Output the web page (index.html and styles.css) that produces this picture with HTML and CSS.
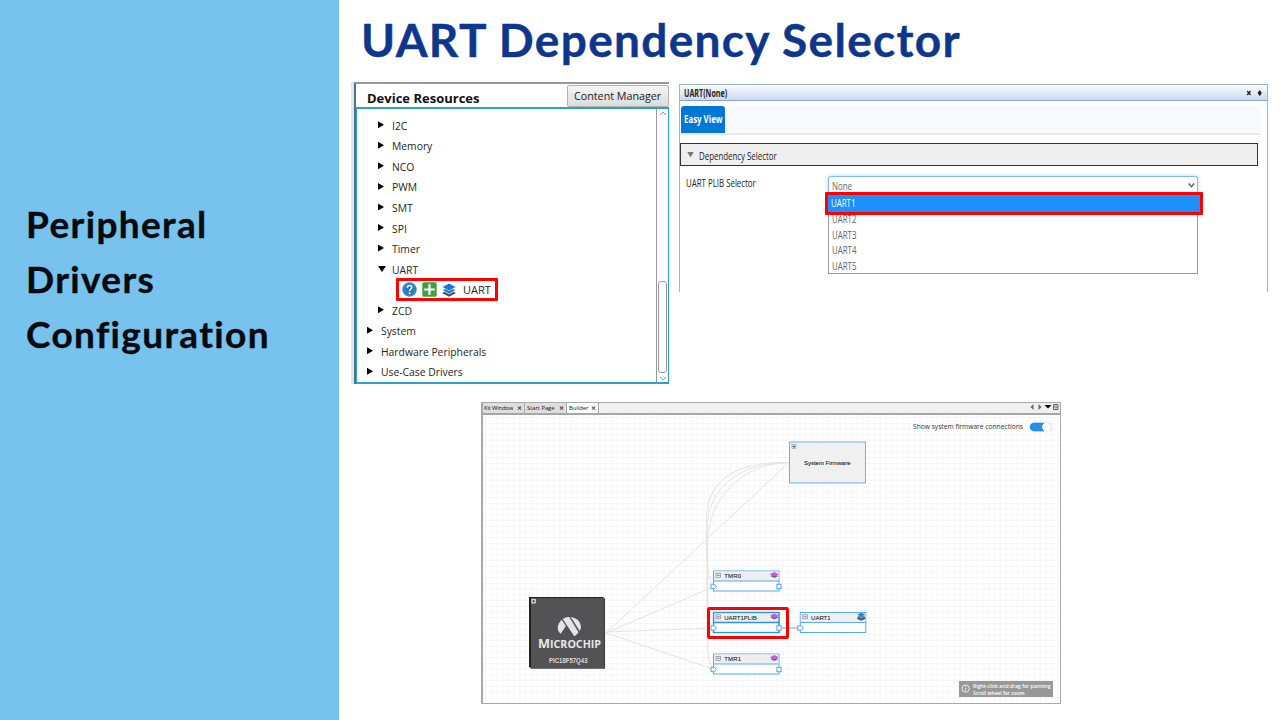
FILE: index.html
```html
<!DOCTYPE html>
<html lang="en">
<head>
<meta charset="utf-8">
<title>UART Dependency Selector</title>
<link rel="stylesheet" href="styles.css">
</head>
<body>
<div class="slide">
  <aside class="side"><h2><span class="fit">Peripheral</span><span class="fit">Drivers</span><span class="fit">Configuration</span></h2></aside>
  <main class="main">
    <h1><span class="fit">UART Dependency Selector</span></h1>
    <div class="panels">
      <section class="resources">
        <header class="res-head"><span class="fit res-title">Device Resources</span><button class="manager"><span class="fit">Content Manager</span></button></header>
        <div class="res-body">
          <ul class="tree">
            <li class="sub"><i class="arrow"></i><span class="fit">I2C</span></li>
            <li class="sub"><i class="arrow"></i><span class="fit">Memory</span></li>
            <li class="sub"><i class="arrow"></i><span class="fit">NCO</span></li>
            <li class="sub"><i class="arrow"></i><span class="fit">PWM</span></li>
            <li class="sub"><i class="arrow"></i><span class="fit">SMT</span></li>
            <li class="sub"><i class="arrow"></i><span class="fit">SPI</span></li>
            <li class="sub"><i class="arrow"></i><span class="fit">Timer</span></li>
            <li class="sub"><i class="arrow open"></i><span class="fit">UART</span></li>
            <li class="leaf"><div class="leaf-box">
              <svg width="15" height="15" viewBox="0 0 15 15"><circle cx="7.5" cy="7.5" r="7.2" fill="#2b7cc4"/><circle cx="7.5" cy="7.5" r="6.1" fill="none" stroke="#4b98d8" stroke-width=".6"/><path d="M5.3 5.8C5.3 4.4 6.2 3.6 7.6 3.6S9.8 4.4 9.8 5.5C9.8 7 7.6 7.1 7.6 8.9" fill="none" stroke="#fff" stroke-width="1.5"/><circle cx="7.6" cy="11.2" r="1" fill="#fff"/></svg>
              <svg width="15" height="15" viewBox="0 0 15 15"><rect x=".3" y=".3" width="14.4" height="14.4" rx="1.5" fill="#3f9f42"/><path d="M7.5 2.3v10.4M2.3 7.5h10.4" stroke="#fff" stroke-width="2.2"/></svg>
              <svg width="14" height="14" viewBox="0 0 14 14"><path d="M0 10 7 6.8 14 10 7 13.8Z" fill="#454e59"/><path d="M0 7 7 4 14 7 7 11Z" fill="#1978dc" stroke="#fff" stroke-width=".7"/><path d="M0 3.9 7 .2 14 3.9 7 7.8Z" fill="#1474e4" stroke="#fff" stroke-width=".6"/></svg>
              <span class="fit">UART</span></div></li>
            <li class="sub"><i class="arrow"></i><span class="fit">ZCD</span></li>
            <li><i class="arrow"></i><span class="fit">System</span></li>
            <li><i class="arrow"></i><span class="fit">Hardware Peripherals</span></li>
            <li><i class="arrow"></i><span class="fit">Use-Case Drivers</span></li>
          </ul>
          <div class="scroll">
            <svg width="8" height="5" viewBox="0 0 8 5"><path d="M1 4 4 1 7 4" fill="none" stroke="#999"/></svg>
            <div class="thumb"></div>
            <svg width="8" height="5" viewBox="0 0 8 5"><path d="M1 1 4 4 7 1" fill="none" stroke="#999"/></svg>
          </div>
        </div>
      </section>
      <section class="uart">
        <header class="uart-head"><span class="fit">UART(None)</span>
          <svg width="18" height="8" viewBox="0 0 18 8"><path d="M1.2 2 4.6 6M4.6 2 1.2 6" stroke="#222" stroke-width="1.3"/><path d="M12 3.9 13.7 1.6 15.4 3.9 13.7 6.6Z" fill="#111" stroke="#111" stroke-width=".7"/></svg></header>
        <div class="tabs"><div class="tab"><span class="fit">Easy View</span></div></div>
        <div class="section"><i class="arrow open grey"></i><span class="fit">Dependency Selector</span></div>
        <div class="field">
          <label><span class="fit">UART PLIB Selector</span></label>
          <div class="select">
            <div class="value"><span class="fit">None</span><svg width="8" height="6" viewBox="0 0 8 6"><path d="M1.8 .5 4.500 3.800 7 .5" fill="none" stroke="#555" stroke-width="1.300"/></svg></div>
            <div class="options">
              <div class="chosen"><span class="fit">UART1</span></div>
              <div><span class="fit">UART2</span></div>
              <div><span class="fit">UART3</span></div>
              <div><span class="fit">UART4</span></div>
              <div><span class="fit">UART5</span></div>
            </div>
          </div>
        </div>
      </section>
    </div>
    <section class="builder">
      <nav class="btabs">
        <div class="btab t1"><span class="fit">Kit Window</span><b>×</b></div>
        <div class="btab t2"><span class="fit">Start Page</span><b>×</b></div>
        <div class="btab t3"><span class="fit">Builder</span><b>×</b></div>
        <svg class="nav" width="29" height="8" viewBox="0 0 29 8"><path d="M3.500 1v6L.5 4ZM8.500 1v6l3-3Z" fill="#666"/><path d="M14.500 2h7l-3.500 3.500Z" fill="#000"/><path d="M23.500 1.500h4.500v5H23.500Z" fill="none" stroke="#666"/><path d="M24.800 3h2v2h-2Z" fill="none" stroke="#666" stroke-width=".7"/></svg>
      </nav>
      <svg class="canvas" width="577" height="288" viewBox="483 415 577 288">
        <defs>
          <pattern id="grid" x="485" y="417" width="5.720" height="5.720" patternUnits="userSpaceOnUse"><path d="M.5 0V6M0 .5H6" stroke="#f6f6f6" fill="none"/></pattern>
          <g id="node"><rect x=".5" y=".5" width="65.500" height="20" fill="#fff" stroke="#58a9f6"/><rect x="1" y="1" width="64.500" height="9.500" fill="#efefef"/><path d="M.5 10.500H66" stroke="#58a9f6"/><rect x="3" y="2.800" width="4.500" height="4" fill="#f4f4f4" stroke="#888" stroke-width=".7"/><path d="M4 4.800h2.600" stroke="#444" stroke-width=".7"/></g>
          <path id="in" d="M-2 13.800H1.500L3.500 16 1.500 18.200H-2Z" fill="#fff" stroke="#4aa2f4"/>
          <rect id="out" x="63.900" y="13.800" width="4.200" height="4.400" fill="#fff" stroke="#4aa2f4"/>
          <g id="layers"><path d="M0 4.600 4 3 8 4.600 4 6.500Z" fill="#666"/><path d="M0 2.600 4 .6 8 2.600 8 3.200 4 4.900 0 3.200Z" fill="#cc55e8"/></g>
        </defs>
        <rect x="483" y="415" width="577" height="288" fill="#fff"/>
        <rect x="483" y="415" width="577" height="288" fill="url(#grid)"/>
        <g fill="none" stroke="#e1e1e1" stroke-width=".9">
          <path d="M606 633 789 462.500M606 633 713 587M606 632 713 628M606 633 713 669"/>
          <path d="M789 462.500C735 461 706 481 706.500 520C706 548 706 575 713 587M789 462.500C735 463 709 490 707 527V640Q707 660 713 669M789 462.500C739 464 710 500 707.500 539V600Q707 620 713 628"/>
        </g>
        <path d="M782 628H799" stroke="#999"/>
        <g><rect x="789.500" y="442" width="76" height="41" fill="#f0f0f0" stroke="#66b1fb"/><rect x="792" y="444.500" width="4" height="4" fill="#eee" stroke="#999" stroke-width=".6"/><path d="M792.700 446.500h2.600M794 445.200v2.600" stroke="#333" stroke-width=".7"/><text class="ct" x="804" y="464.500" textLength="46.500">System Firmware</text></g>
        <g transform="translate(713 570.500)"><use href="#node"/><use href="#in"/><use href="#out"/><use href="#layers" x="57.300" y="1"/><text class="ct" x="11.300" y="7.600" textLength="16.700">TMR0</text></g>
        <g transform="translate(713 612)"><use href="#node"/><rect x=".5" y=".5" width="65.500" height="20" fill="none" stroke="#2792f4" stroke-width="1.300"/><path d="M.5 10.500H66" stroke="#2792f4" stroke-width="1.300"/><use href="#in"/><use href="#out"/><use href="#layers" x="57.300" y="1"/><text class="ct" x="11.300" y="7.900" textLength="32.500">UART1PLIB</text></g>
        <g transform="translate(713 653.500)"><use href="#node"/><use href="#in"/><use href="#out"/><use href="#layers" x="57.300" y="1"/><text class="ct" x="11.300" y="7.600" textLength="16.700">TMR1</text></g>
        <g transform="translate(799.800 612)"><use href="#node"/><use href="#in"/><path d="M57.500 5.500 61.500 3.500 65.500 5.500 65.500 7 61.500 8.700 57.500 7Z" fill="#585858"/><path d="M57.500 4.200 61.500 2 65.500 4.200 61.500 6.500Z" fill="#2481de" stroke="#ddd" stroke-width=".3"/><path d="M57.500 2.600 61.500.4 65.500 2.600 61.500 4.800Z" fill="#2481de" stroke="#ddd" stroke-width=".3"/><text class="ct" x="11.300" y="7.900" textLength="19.500">UART1</text></g>
        <rect x="708.500" y="608.500" width="79" height="29" rx=".7" fill="none" stroke="#f00" stroke-width="3"/>
        <g><path d="M529 597H603L605 599V668.500H531L529 666.500Z" fill="#222"/><rect x="531" y="598" width="73.500" height="70.500" fill="#535355"/><rect x="531.500" y="599" width="4.300" height="4.300" fill="#eee" stroke="#bbb" stroke-width=".4"/><path d="M532.300 601.200h2.700M533.650 599.800v2.800" stroke="#222" stroke-width=".8"/>
        <g fill="#e4e4e4"><path d="M557.800 629C557.500 625.500 559 622 561.700 619.800L565.800 626 560.800 633.800C559.200 632.600 558.100 631 557.800 629Z"/><path d="M562.700 619C564.800 617.600 567 617 569.200 617L578.500 632.200C577.500 633.800 576 635.200 574.200 636.200Z"/><path d="M570.800 617.100C577 617.900 581 622.500 580.900 627.300 580.800 628.700 580.400 629.900 579.700 631Z"/></g>
        <text x="538" y="647.800" class="chipname" textLength="63" lengthAdjust="spacingAndGlyphs"><tspan font-size="12">M</tspan>ICROCHIP</text>
        <text x="549" y="662.800" class="part" textLength="38.500" lengthAdjust="spacingAndGlyphs">PIC18F57Q43</text></g>
        <text x="913" y="428.600" class="show" textLength="110" lengthAdjust="spacingAndGlyphs">Show system firmware connections</text>
        <rect x="1030.500" y="423" width="21" height="8" rx="4" fill="#fff" stroke="#bcd9f5" stroke-width=".7"/><path d="M1034 422.800H1044V431.300H1034A4.250 4.250 0 0 1 1034 422.800Z" fill="#2490ee"/><circle cx="1046.300" cy="427" r="4.200" fill="#fff"/>
        <g><rect x="959" y="681" width="94" height="16" fill="#989898"/><circle cx="965.700" cy="688.600" r="3.600" fill="none" stroke="#fff" stroke-width=".8"/><path d="M965.700 688v2.500M965.700 686.300v.9" stroke="#fff" stroke-width=".9"/><text class="tip" x="973" y="688" textLength="77.500" lengthAdjust="spacingAndGlyphs">Right-click and drag for panning</text><text class="tip" x="973" y="694.800" textLength="51.500" lengthAdjust="spacingAndGlyphs">Scroll wheel for zoom</text></g>
      </svg>
    </section>
  </main>
</div>
</body>
</html>
```
FILE: styles.css
```css
* { box-sizing: border-box; }
body { margin: 0; background: #fff; }
.slide { display: flex; width: 1280px; height: 720px; overflow: hidden; font-family: "Open Sans", sans-serif; }
.fit { display: inline-block; white-space: nowrap; transform-origin: 0 50%; }
.side { width: 339px; background: #78c3ee; padding: 196px 0 0 26px; }
.side h2 { margin: 0; font: 700 37px/55px Lato, sans-serif; color: #070b10; display: flex; flex-direction: column; align-items: flex-start; letter-spacing: 1.350px; font-variant-ligatures: none; -webkit-text-stroke: .4px #070b10; }
.main { flex: 1; min-width: 0; }
h1 { margin: 0; height: 82px; padding-left: 22px; font: 700 46px/79px Lato, sans-serif; color: #0e378c; white-space: nowrap; letter-spacing: 1.300px; -webkit-text-stroke: .4px #0e378c; }
.panels { display: flex; gap: 10px; height: 320px; padding-left: 15px; align-items: flex-start; }

.resources { width: 315px; height: 302px; border-top: 2px solid #999; border-left: 2px solid #52738d; box-shadow: -3px 0 #e2e6ea; display: flex; flex-direction: column; }
.res-head { height: 23px; display: flex; justify-content: space-between; padding-left: 11px; color: #111; }
.res-title { font-size: 13px; font-weight: 700; line-height: 29px; }
.manager { width: 102px; height: 22px; margin-top: 1px; padding: 0 0 0 6px; text-align: left; border: 1px solid #b3b3b3; border-radius: 2px; background: linear-gradient(#f5f5f5, #dcdcdc); font: 11px/18px "Open Sans", sans-serif; color: #222; white-space: nowrap; }
.manager .fit { transform: scaleX(.975); vertical-align: top; }
.res-body { flex: 1; min-height: 0; display: flex; border: 2px solid #2aa3cb; border-width: 2px 1px 2px 1px; }
.tree { flex: 1; margin: 0; padding: 6px 0 0 10px; list-style: none; font-size: 11px; color: #262626; }
.tree li { height: 20.560px; display: flex; align-items: center; }
.tree li > .fit { transform: scaleX(.94); }
.tree li.sub { padding-left: 11px; }
.arrow { flex: none; width: 14px; height: 8px; }
.arrow::before { content: ""; display: block; width: 6px; height: 7px; background: #000; clip-path: polygon(0 0, 100% 50%, 0 100%); }
.arrow.open::before { width: 8px; height: 6px; margin-top: 1px; clip-path: polygon(0 0, 100% 0, 50% 100%); }
.arrow.grey::before { background: #777; width: 7px; }
.tree li.leaf { padding-left: 29px; }
.leaf-box { width: 102px; height: 23px; flex: none; border: 3px solid #f00; border-radius: 1px; display: flex; align-items: center; gap: 5px; padding-left: 3px; }
.leaf-box .fit { margin-left: 2px; }
.scroll { width: 12px; border-left: 1px solid #999; display: flex; flex-direction: column; align-items: center; padding: 2px 0 1px; }
.thumb { width: 9px; height: 92px; margin: auto 0 3px; border: 1px solid #999; border-radius: 3px; background: #fff; }

.uart { width: 589px; height: 208px; margin-top: 2px; border: 1px solid #9fb5c8; border-bottom: 0; color: #222; font-size: 10.500px; }
.uart .fit { transform: scaleX(.75); }
.uart-head { height: 16px; padding: 0 3px 0 4px; display: flex; align-items: center; justify-content: space-between; border-bottom: 1px solid #8aa5cf; background: linear-gradient(#fbfdff, #cbd9f0); font-weight: 700; }
.uart-head .fit { transform: scaleX(.68); }
.tabs { margin: 5px 6px 0 1px; height: 29px; background: #f8f9fb; border-bottom: 2px solid #eaebed; }
.tab { width: 44px; height: 27px; border-radius: 3px 3px 0 0; background: #0078d7; color: #fff; padding-left: 3px; line-height: 27px; font-weight: 700; }
.section { margin: 8px 9px 0 0; height: 23px; border: 1px solid #333; background: #efefef; padding-left: 6px; display: flex; align-items: center; }
.section .arrow { width: 12px; }
.section .fit { transform: translateY(1px) scaleX(.75); }
.field { display: flex; padding: 10px 0 0 6px; }
.field label { width: 142px; line-height: 13px; padding-top: 1px; }
.select { width: 370px; height: 98px; color: #666; }
.value { height: 18px; border: 1px solid #7cbcf0; border-bottom: 0; border-radius: 3px 3px 0 0; box-shadow: 0 0 4px #a9d6fa; padding: 1px 2px 0 3px; display: flex; align-items: center; justify-content: space-between; background: #fff; }
.options { position: relative; height: 81px; border: 1px solid #999; border-top: 0; background: #fff; }
.options div { height: 15.600px; line-height: 15.600px; padding-left: 3px; }
.options .chosen { width: 378px; height: 23px; margin: -2px 0 -3px -4px; border: 3px solid #f00; border-radius: 1px; background: #1e90ff; color: #fff; line-height: 17px; position: relative; }

.builder { margin-left: 142px; width: 580px; height: 302px; border: 1px solid #aaa; border-width: 1px 1px 1px 2px; display: flex; flex-direction: column; }
.btabs { height: 12px; background: #f0f0f0; border-bottom: 2px solid #a6a6a6; display: flex; font-size: 5.800px; line-height: 10px; color: #111; }
.btab { display: flex; justify-content: space-between; padding: 0 2px 0 2px; border-right: 1px solid #aaa; background: #dedede; white-space: nowrap; }
.btab b { font: 700 6px/9px "DejaVu Sans", sans-serif; }
.t1 { width: 42px; padding-left: 1px; letter-spacing: -.150px; } .t2 { width: 42px; } .t3 { width: 32px; background: #fff; }
.nav { margin: 0 1px 0 auto; }
.canvas { display: block; }
.ct { font: 6px "Liberation Sans", sans-serif; fill: #111; stroke: #222; stroke-width: .08px; }
.chipname { font: 700 10px "Open Sans", sans-serif; fill: #e8e8e8; }
.part { font: 700 6.500px "Liberation Sans", sans-serif; fill: #ddd; }
.show { font: 7px "Open Sans", sans-serif; fill: #333; }
.tip { font: 600 5.500px "Open Sans", sans-serif; fill: #fff; }
/* room for the last option's descent */
.options { height: 82px; }
.select { height: 100px; }
```
